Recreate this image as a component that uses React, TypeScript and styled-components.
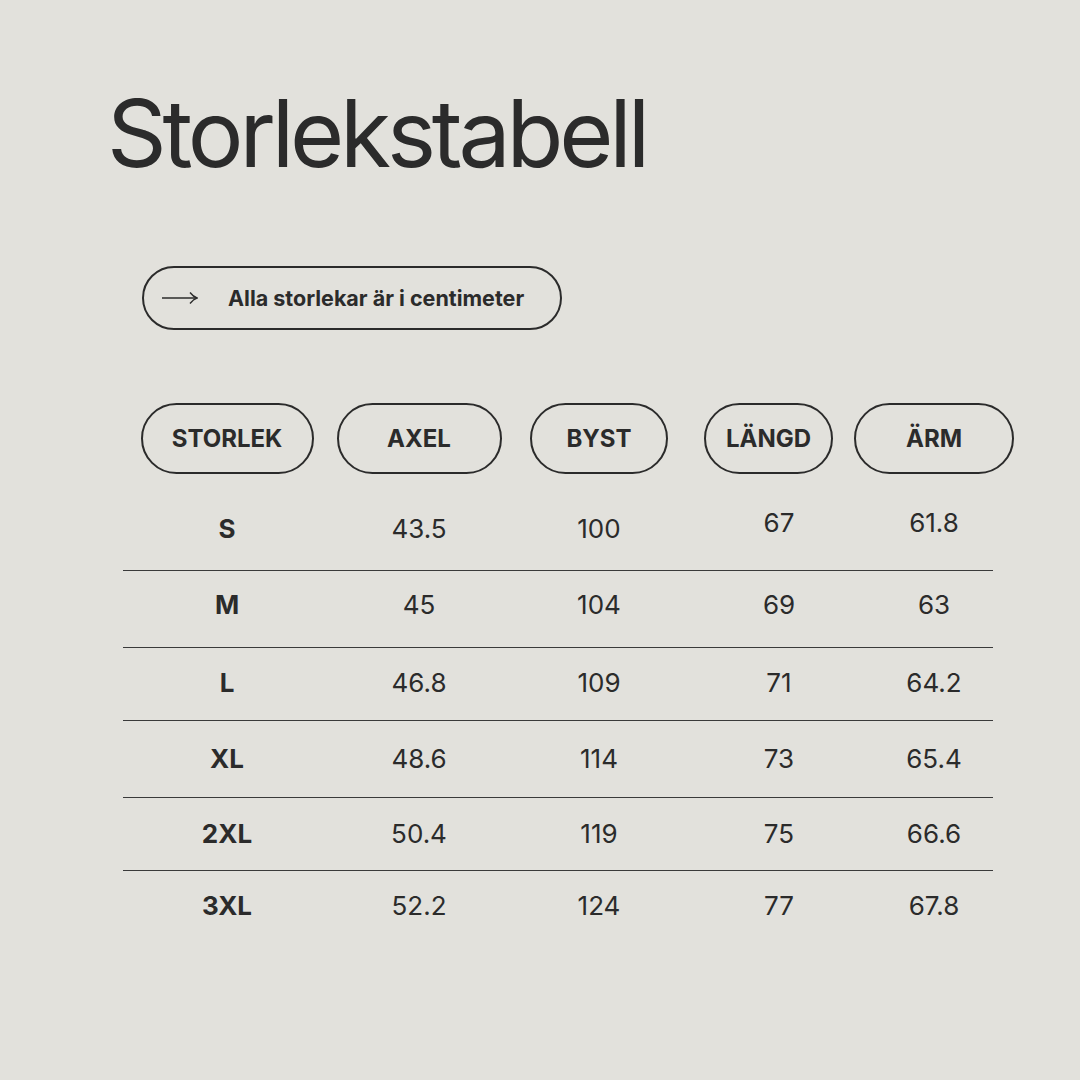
import React from "react";
import styled, { createGlobalStyle } from "styled-components";

const Global = createGlobalStyle`
  html, body { margin: 0; padding: 0; background: #e2e1dc; }
  body { font-family: Inter, "Noto Sans", sans-serif; color: #2b2b2b; }
`;

const Page = styled.div`
  width: 1080px;
  height: 1080px;
  box-sizing: border-box;
  background: #e2e1dc;
  padding: 80px 0 0 0;
  display: flex;
  flex-direction: column;
`;

const Title = styled.h1`
  margin: 0 0 0 107px;
  font-family: Inter, sans-serif;
  font-weight: 400;
  font-size: 93px;
  line-height: 106px;
  letter-spacing: -0.045em;
  color: #2b2b2b;
`;

const Note = styled.div`
  margin: 80px 0 0 142px;
  width: 420px;
  height: 64px;
  box-sizing: border-box;
  border: 2px solid #2b2b2b;
  border-radius: 32px;
  display: flex;
  align-items: center;
  padding-left: 18px;
  gap: 30px;
`;

const NoteText = styled.span`
  font-family: Inter, sans-serif;
  font-weight: 700;
  font-size: 21.5px;
  letter-spacing: 0;
  color: #2b2b2b;
`;

const Table = styled.div`
  margin: 73px 0 0 123px;
  width: 870px;
  display: flex;
  flex-direction: column;
`;

const cols = "208px 176px 184px 176px 134px";

const HeaderRow = styled.div`
  display: grid;
  grid-template-columns: ${cols};
  height: 71px;
  margin-bottom: 20px;
`;

const HeaderPill = styled.div<{ $w: number; $nudge?: number }>`
  justify-self: center;
  width: ${(p) => p.$w}px;
  height: 71px;
  box-sizing: border-box;
  border: 2px solid #2b2b2b;
  border-radius: 36px;
  display: flex;
  align-items: center;
  justify-content: center;
  margin-right: ${(p) => p.$nudge || 0}px;
  font-family: Inter, sans-serif;
  font-weight: 700;
  font-size: 24px;
  color: #2b2b2b;
`;

const Row = styled.div<{ $h: number; $pb: number; $line: boolean }>`
  display: grid;
  grid-template-columns: ${cols};
  align-items: center;
  box-sizing: border-box;
  height: ${(p) => p.$h}px;
  padding-bottom: ${(p) => p.$pb}px;
  border-bottom: ${(p) => (p.$line ? "1.5px solid #3a3a3a" : "none")};
`;

const Cell = styled.div<{ $bold?: boolean; $raise?: number }>`
  justify-self: center;
  font-family: Inter, sans-serif;
  font-weight: ${(p) => (p.$bold ? 700 : 400)};
  font-size: 26px;
  line-height: 32px;
  color: #2b2b2b;
  margin-bottom: ${(p) => (p.$raise || 0) * 2}px;
`;

const Arrow = () => (
  <svg width="36" height="14" viewBox="0 0 36 14" fill="none">
    <path d="M0 7 H34" stroke="#2b2b2b" strokeWidth="1.4" />
    <path d="M28 1.5 C30 4 32 6 35 7 C32 8 30 10 28 12.5" stroke="#2b2b2b" strokeWidth="1.4" fill="none" />
  </svg>
);

const headers = [
  { t: "STORLEK", w: 173 },
  { t: "AXEL", w: 165 },
  { t: "BYST", w: 138 },
  { t: "LÄNGD", w: 129, nudge: 21 },
  { t: "ÄRM", w: 160 },
];

const rows = [
  { s: "S", v: ["43.5", "100", "67", "61.8"], h: 77, pb: 7, raise: [0, 0, 6, 6] },
  { s: "M", v: ["45", "104", "69", "63"], h: 77, pb: 9 },
  { s: "L", v: ["46.8", "109", "71", "64.2"], h: 73, pb: 3 },
  { s: "XL", v: ["48.6", "114", "73", "65.4"], h: 77, pb: 0 },
  { s: "2XL", v: ["50.4", "119", "75", "66.6"], h: 73, pb: 0 },
  { s: "3XL", v: ["52.2", "124", "77", "67.8"], h: 70, pb: 0 },
];

export default function App() {
  return (
    <Page>
      <Global />
      <Title>Storlekstabell</Title>
      <Note>
        <Arrow />
        <NoteText>Alla storlekar är i centimeter</NoteText>
      </Note>
      <Table>
        <HeaderRow>
          {headers.map((h) => (
            <HeaderPill key={h.t} $w={h.w} $nudge={h.nudge}>
              {h.t}
            </HeaderPill>
          ))}
        </HeaderRow>
        {rows.map((r, i) => (
          <Row key={r.s} $h={r.h} $pb={r.pb} $line={i < rows.length - 1}>
            <Cell $bold>{r.s}</Cell>
            {r.v.map((v, j) => (
              <Cell key={j} $raise={r.raise ? r.raise[j] : 0}>
                {v}
              </Cell>
            ))}
          </Row>
        ))}
      </Table>
    </Page>
  );
}
